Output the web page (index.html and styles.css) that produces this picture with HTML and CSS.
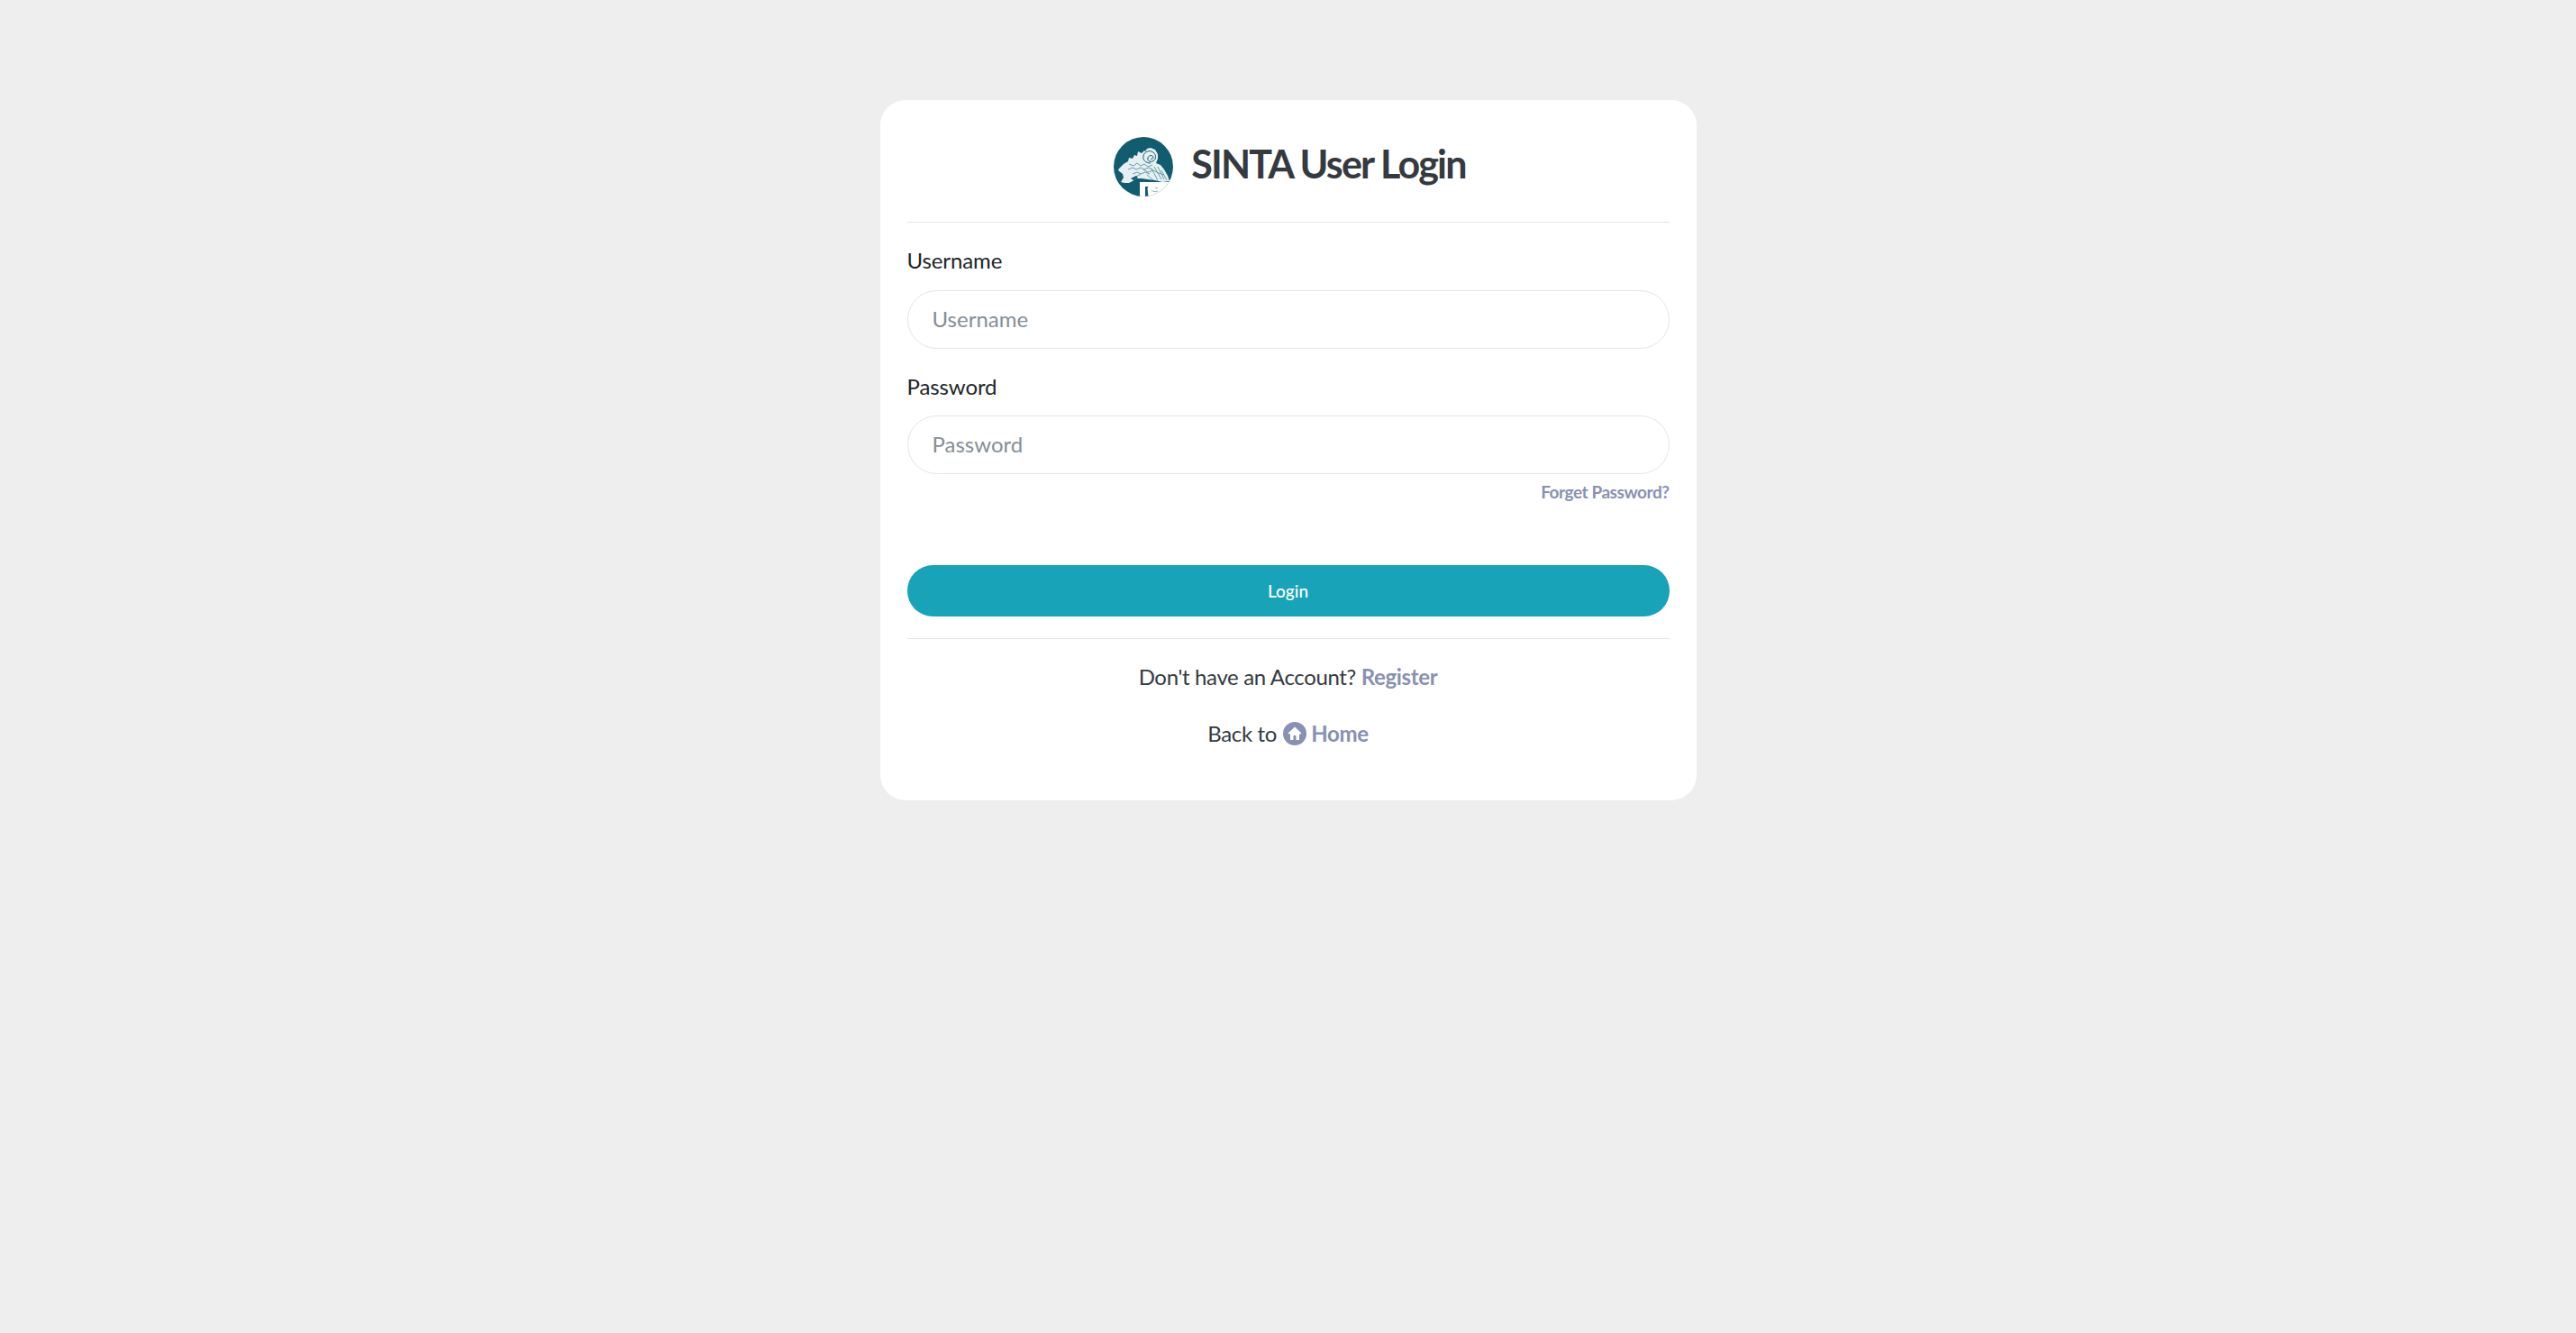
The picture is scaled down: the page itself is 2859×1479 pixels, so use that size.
FILE: index.html
```html
<!DOCTYPE html>
<html lang="en">
<head>
<meta charset="utf-8">
<title>SINTA User Login</title>
<link rel="stylesheet" href="styles.css">
</head>
<body>
<main class="card">
  <header class="card-head">
    <svg class="logo" viewBox="0 0 66 66" aria-hidden="true">
      <defs><clipPath id="disc"><circle cx="33" cy="33" r="33"/></clipPath></defs>
      <circle cx="33" cy="33" r="33" fill="#125c70"/>
      <g clip-path="url(#disc)">
        <path fill="#e6f0f2" d="M11 30l5-3 1-4 4 1 2-4 3 1 1-5 4 2 3-3 1 1 2-3 4-1 5 2 3 5 0 5-2 5 5 2 4 5 4 7 2 6-8 1-8-2-8-1-7-1-6 0-4 3-4 2-5 0-4-1 3-5-1-4-5-4 1-2z"/>
        <path fill="none" stroke="#125c70" stroke-width="1" d="M41 29c-6 0-9-4-8-8 1-5 7-7 11-4 4 3 3 9-1 10-3 1-6-1-5-4 1-3 5-3 6-1 0 2-1 3-3 2"/>
        <path fill="none" stroke="#5b94a4" stroke-width=".9" d="M17 30l5 2 4-3 4 3 4-2 4 3 5-2M16 36l5-2 4 2 5-2 4 2 5-2 4 2M21 41l5-2 4 2 5-2 5 2M33 36l5 3 6-2 6 3 6 2M45 33l8 14M49 33l7 14M42 35l7 13M53 37l6 11M37 42l7 6M25 44l5-3"/>
        <path fill="#125c70" d="M19 46l6-3 2 2-5 3z"/>
        <path fill="#fff" d="M29 50h37v16h-37z"/>
        <path fill="#125c70" d="M35 55h3.500l-1 2 1 9h-3.500z"/>
        <path fill="none" stroke="#8fb4bf" stroke-width="1" d="M42 59c2 2 4 2 7 1M46 56l3 1"/>
      </g>
    </svg>
    <h1 class="title">SINTA User Login</h1>
  </header>
  <form class="login-form">
    <div class="field">
      <label class="field-label" for="username">Username</label>
      <input class="field-input" id="username" type="text" placeholder="Username">
    </div>
    <div class="field">
      <label class="field-label" for="password">Password</label>
      <input class="field-input" id="password" type="password" placeholder="Password">
    </div>
    <div class="forgot"><a class="link" href="#">Forget Password?</a></div>
    <button class="btn-login" type="button">Login</button>
  </form>
  <footer class="card-foot">
    <p class="foot-line">Don't have an Account? <a class="link" href="#">Register</a></p>
    <p class="foot-line">Back to <a class="link" href="#"><svg class="home-icon" viewBox="0 0 26 26" aria-hidden="true"><circle cx="13" cy="13" r="13" fill="currentColor"/><path fill="#fff" d="M13 5.500L5.500 12.500l1.500 1.300 1-.9V20h3.500v-5h3v5H18v-7.100l1 .9 1.500-1.300z"/></svg> Home</a></p>
  </footer>
</main>
</body>
</html>
```
FILE: styles.css
```css
* { box-sizing: border-box; }
html, body { margin: 0; padding: 0; }
body {
  min-height: 100vh;
  background: #eeeeee;
  padding-top: 111px;
  font-family: Lato, "Noto Sans", sans-serif;
  color: #212529;
}
.card {
  width: 906px;
  height: 777px;
  margin: 0 auto;
  padding: 41px 30px 0;
  background: #fff;
  border-radius: 28px;
}
.card-head {
  display: flex;
  justify-content: center;
  align-items: center;
  gap: 20px;
  padding: 0 0 28px 4px;
  border-bottom: 1px solid #e3e4e6;
}
.logo { width: 66px; height: 66px; flex: none; }
.title {
  margin: 0;
  padding-bottom: 6px;
  font-size: 43px;
  line-height: 56px;
  font-weight: 700;
  letter-spacing: -1.8px;
  color: #343a40;
}
.field { margin-top: 25px; }
.field + .field { margin-top: 24px; }
.field-label {
  display: block;
  height: 36px;
  line-height: 34px;
  margin-bottom: 14px;
  font-size: 24px;
  letter-spacing: -.1px;
}
.field + .field .field-label { line-height: 36px; }
.field-input {
  display: block;
  width: 100%;
  height: 65px;
  padding: 0 27px 2px;
  border: 1px solid #e3e4e6;
  border-radius: 33px;
  background: #fff;
  font: inherit;
  font-size: 24px;
  color: #495057;
  outline: none;
}
.field-input::placeholder { color: #868e96; opacity: 1; }
.forgot {
  margin-top: 7px;
  height: 26px;
  line-height: 26px;
  text-align: right;
  font-size: 19px;
  letter-spacing: -.45px;
}
.link { color: #8891b1; text-decoration: none; font-weight: 700; }
.btn-login {
  display: block;
  width: 100%;
  height: 57px;
  margin-top: 68px;
  padding: 0 0 1px;
  border: 0;
  border-radius: 29px;
  background: #18a3b8;
  color: #fff;
  font: inherit;
  font-size: 19px;
  font-weight: 500;
}
.card-foot {
  margin-top: 24px;
  border-top: 1px solid #e3e4e6;
  padding-top: 24px;
  text-align: center;
  font-size: 24px;
  letter-spacing: -.35px;
  color: #343a40;
}
.foot-line { margin: 0 0 27px; line-height: 36px; }
.home-icon { width: 26px; height: 26px; margin-left: 1px; vertical-align: -4px; }
```
